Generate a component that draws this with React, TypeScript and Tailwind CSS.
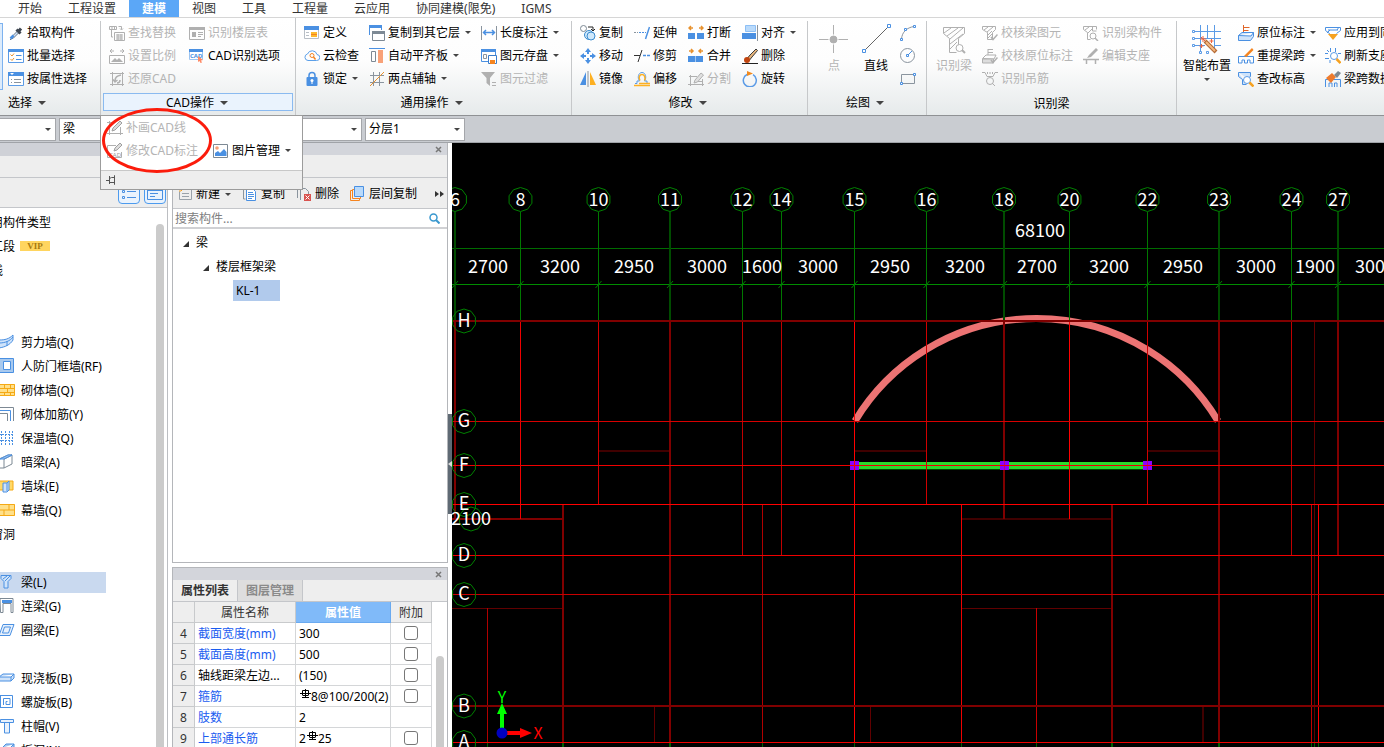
import React, { useState } from 'react';

const BLUE = '#4a90e2';
const GRAY = '#b0b0b0';
const ORANGE = '#f5841f';

// 16x16 toolbar drawings
const ICONS: Record<string, React.ReactNode> = {
    pick: (
        <>
            <path d="M3 14 2 15M4 11.500 10 5.500 11.500 7 5.500 13 3 14Z" fill="#cfe3fa" stroke="#6b7785" />
            <path d="m2.500 13.500 3-3" stroke={BLUE} strokeWidth="2.500" />
            <path d="m8.500 4.500 4 4M10.500 6.500l2.500-3" stroke="#3d4650" strokeWidth="3" />
        </>
    ),
    batch: (
        <>
            <path d="M.5 1.500h15v13H.5z" fill="#fff" stroke="#5b9be6" />
            <path d="M0 1h16v3H0z" fill={BLUE} />
            <path d="m2.500 6.500 1.500 1.500 2-2.500M2.500 11l1.500 1.500 2-2.500" stroke="#e8912d" />
            <path d="M8 7.500h5.500M8 11.500h5.500" stroke={BLUE} />
        </>
    ),
    attr: (
        <>
            <path d="M.5 1.500h15v13H.5z" fill="#fff" stroke="#5b9be6" />
            <path d="M0 1h16v4H0z" fill={BLUE} />
            <path d="M2 2h4L4 4z" fill="#fff" />
            <path d="M3 8.500h1M6 8.500h7M3 11.500h1M6 11.500h7" stroke="#8a949e" />
        </>
    ),
    find: (
        <>
            <path d="M.5 1.500h7v3h-7zM3 1.500v3M5.500 1.500v3M9.500 1.500h3v3M11 3.500l1.500 1.500L14 3.500M2.500 5v7H4" stroke={GRAY} />
            <path d="M5.500 7.500h10v8h-10zM7 10h7M7 12h7M7 14h7M9 9v6M12 9v6" stroke={GRAY} />
        </>
    ),
    scale: (
        <>
            <path d="M1 3h4M3 1 1 3l2 2M15 3h-4m2-2 2 2-2 2M.5 7.500h15v8H.5z" stroke={GRAY} />
            <path d="m2 14 4-4 2 2 2-2 4 4z" fill={GRAY} />
        </>
    ),
    restore: (
        <>
            <path d="M1 2.500h14M3.500 1v14M1 13.500h14M13.500 1v14" stroke={GRAY} />
            <path d="M6 10c0-4 2-5 6-6M4 8.500 6 11l2.500-2M8 12c2 0 3-1 3-3" stroke={GRAY} strokeWidth="1.500" />
        </>
    ),
    floor: (
        <>
            <path d="M.5 2.500h15v12H.5z" stroke={GRAY} />
            <path d="M0 2h16v3H0zM3 7h4v5H3z" fill={GRAY} />
            <path d="M9 7.500h5M9 9.500h5M9 11.500h3" stroke={GRAY} />
        </>
    ),
    cadOpt: (
        <>
            <path d="M.5 1.500h13v10H.5z" fill="#fff" stroke="#9cc4f2" />
            <path d="M0 1h14v3H0z" fill={BLUE} />
            <text x="1" y="10" fontSize="6" fontWeight="700" fill={BLUE}>CAD</text>
            <path d="m9 8 5 4-2 .5 1 2-1.500.500-1-2-1.500 1z" fill="#ff8a65" />
        </>
    ),
    define: (
        <>
            <path d="M.5 1.500h14v12H.5z" fill="#fff" stroke="#b9bfc6" />
            <path d="M0 1h15v4H0z" fill={BLUE} />
            <path d="M2 7.500h3M2 10.500h3" stroke="#b9bfc6" />
            <path d="M7 7h6v5H7z" fill="#fdb92e" /><path d="M7 9.500h6" stroke={ORANGE} />
        </>
    ),
    cloud: (
        <>
            <path d="M4 12.500h8.500a3 3 0 0 0 .5-6A5 5 0 0 0 3.500 6 3.300 3.300 0 0 0 4 12.500Z" stroke="#5b9fe8" />
            <circle cx="8" cy="7.500" r="2" stroke={ORANGE} /><path d="m9.500 9 2 2.500" stroke={ORANGE} strokeWidth="1.500" />
        </>
    ),
    lock: (
        <>
            <path d="M5 7V4.500a3 3 0 0 1 6 0V7" stroke={BLUE} strokeWidth="1.500" />
            <rect x="2.500" y="6" width="11" height="9" rx="1" fill={BLUE} />
            <circle cx="8" cy="9.500" r="1.500" fill="#fff" /><path d="M8 10v3" stroke="#fff" />
        </>
    ),
    copyFloor: (
        <>
            <path d="M.5 10V.5h12V5" stroke={BLUE} /><path d="M0 0h13v3H0z" fill={BLUE} />
            <path d="M3.500 6.500h12v9h-12z" fill="#fff" stroke="#7d8994" /><path d="M3 6h13v3H3z" fill="#7d8994" />
        </>
    ),
    board: (
        <>
            <path d="M0 .5h16" stroke={BLUE} />
            <path d="M2.500 3.500h4v10h-4z" stroke="#7d8994" /><path d="M9 2h5v13H9z" fill="#f8a178" />
        </>
    ),
    axis: (
        <>
            <path d="M4.500 1v14M10.500 1v14M1 4.500h14M1 11.500h14" stroke="#8a949e" />
            <path d="m1 15 14-14" stroke="#e8912d" />
        </>
    ),
    length: (
        <>
            <path d="M.5 1v14M15.500 1v14" stroke="#8a949e" />
            <path d="M3 7.500h10M5 5 2.500 7.500 5 10M11 5l2.500 2.500L11 10" stroke={BLUE} strokeWidth="1.500" />
        </>
    ),
    save: (
        <>
            <path d="M.5 1.500h14v12H.5z" fill="#fff" stroke={BLUE} /><path d="M0 1h15v3H0z" fill={BLUE} />
            <path d="M2.500 6.500h3v4h-3z" stroke="#8a949e" />
            <path d="M7.500 7.500h8v8h-8z" fill="#fff" stroke="#3b7cc9" /><path d="M9 12h5v4H9z" fill={ORANGE} />
        </>
    ),
    filter: (
        <>
            <path d="M0 1h14L9 7v8L5.500 12V7z" fill={GRAY} /><path d="M11 11.500h4M11 14.500h4" stroke={GRAY} />
        </>
    ),
    copy: (
        <>
            <circle cx="3.500" cy="3.500" r="3" stroke="#7d8994" />
            <circle cx="9" cy="10" r="4.500" fill="#cfe8fb" stroke="#3b8ccf" /><circle cx="11" cy="11" r="4" fill="#cfe8fb" stroke="#3b8ccf" />
            <path d="M8 2h5v4M11 4l2 2 2-2" stroke="#222" />
        </>
    ),
    move: (
        <path d="m8 0 3 4H9v2H7V4H5zM8 16l-3-4h2v-2h2v2h2zM0 8l4-3v2h2v2H4v2zM16 8l-4 3V9h-2V7h2V5z" fill={BLUE} />
    ),
    mirror: (
        <>
            <path d="M6 1v13H0z" fill={BLUE} /><path d="M10 1v13h6z" fill="#fdb022" /><path d="M8 0v16" stroke="#8a949e" />
        </>
    ),
    extend: (
        <>
            <path d="M0 7.500h4" stroke="#8a949e" strokeDasharray="2 1" /><path d="M5 7.500h7" stroke={BLUE} strokeDasharray="2 1" />
            <path d="m11.500 14 4-12" stroke={BLUE} strokeWidth="1.500" />
        </>
    ),
    trim: (
        <>
            <path d="M0 7.500h6" stroke="#333" /><path d="M9 7.500h7" stroke={BLUE} strokeDasharray="3 1" strokeWidth="1.500" />
            <path d="m4 14 4-12" stroke="#333" />
        </>
    ),
    offset: (
        <>
            <path d="M1 12.500h2V10h2.500C3 6.500 4.500 1.500 8 1.500S13 6.500 10.500 10H13v2.500h3" stroke="#5b9be6" />
            <path d="M5 12.500h11M6 9.500C4 6 6 3.500 8 3.500s4 2.500 2.500 6" stroke="#fdb022" strokeWidth="1.500" />
            <path d="M0 14.500h16" stroke="#fdb022" strokeWidth="1.500" />
        </>
    ),
    breakUp: (
        <>
            <path d="M0 8h7v6H0zM9 8h7v6H9z" fill={BLUE} />
            <path d="M1 3h4M3 1 1 3l2 2M15 3h-4m2-2 2 2-2 2" stroke="#e8912d" strokeWidth="1.500" />
        </>
    ),
    merge: (
        <>
            <path d="M0 8h7.500v6H0zM8 8h7v6H8z" fill={BLUE} />
            <path d="M1 3h4M3 1l2 2-2 2M15 3h-4m2-2-2 2 2 2" stroke="#e8912d" strokeWidth="1.500" />
        </>
    ),
    split: (
        <>
            <path d="M1 5.500h8M2.500 4v11M0 13.500h16M14.500 8v7M9 10.500h5" stroke={GRAY} />
            <path d="m6 12 1-3 6-7 2.500 2-6 7z" fill="#e0e0e0" stroke={GRAY} />
        </>
    ),
    align: (
        <>
            <path d="M3.500.5h10v6h-10z" fill="#b9dafb" stroke="#8dbff5" /><path d="M0 8h14v6H0z" fill={BLUE} /><path d="M15.500 0v16" stroke="#8a949e" />
        </>
    ),
    erase: (
        <>
            <path d="m4 12 4-5 6-6 1.500 1.500L10 9l-4 5z" fill="#e7b57c" stroke="#3a3a3a" />
            <circle cx="5" cy="12" r="3" fill="#c1440e" /><path d="M0 15.500h16" stroke="#222" />
        </>
    ),
    rotate: (
        <>
            <path d="M5 3.500a6.500 6.500 0 1 0 6 .2" stroke="#5b9be6" strokeWidth="1.500" /><path d="m5 0 6 2.500L5 5z" fill="#f28a1d" />
        </>
    ),
    arc: (
        <>
            <path d="M1.500 14C2 7 7 2.500 14 1.500" stroke="#8a949e" />
            <path d="M.5 13.500h2v2h-2zM4.500 3.500h2v2h-2zM13.500.5h2v2h-2z" fill="#fff" stroke={BLUE} />
        </>
    ),
    circle: (
        <>
            <circle cx="7.500" cy="7.500" r="7" stroke="#8a949e" /><path d="m8 7 4-4" stroke={BLUE} /><path d="M6.500 6.500h2v2h-2z" stroke={BLUE} />
        </>
    ),
    rect: (
        <>
            <path d="M1.500 3.500h13v9h-13z" stroke="#8a949e" /><path d="M.5 11.500h2v2h-2zM13.500 2.500h2v2h-2z" fill="#fff" stroke={BLUE} />
        </>
    ),
    checkBeam: (
        <>
            <path d="M.5 1.500h13v3l-3 3v7h-5v-7l-5-3zM2 5l4-3M5 7l6-5M6 10l4-4M6 13l4-4" stroke={GRAY} />
            <path d="m9 12 2 2.500 4.500-5" stroke={GRAY} strokeWidth="1.500" />
        </>
    ),
    checkMark: (
        <>
            <path d="M6 7V1M6 1.500h5M6 4.500h5M.5 10.500 4 7h10l-2 4z" stroke={GRAY} /><path d="M.5 11h11v4H.5z" fill="#ddd" stroke={GRAY} />
            <path d="m9 12 2 2.500 4.500-5" stroke={GRAY} strokeWidth="1.500" />
        </>
    ),
    hook: (
        <>
            <path d="M0 1.500h3l2 4h6l2-4h3M5.500 1v2M8 1v2M10.500 1v2" stroke={GRAY} /><circle cx="8" cy="10" r="3.500" stroke={GRAY} /><path d="m10 12 3 3" stroke={GRAY} />
        </>
    ),
    beamPart: (
        <>
            <path d="M.5 1.500h13v3M.5 1.500v3l4 3v7h3M2 5l4-3M5 8l4-4M9.500 1v5h4" stroke={GRAY} />
            <circle cx="10" cy="11" r="3" stroke={GRAY} /><path d="m12 13 3 3" stroke={GRAY} strokeWidth="1.500" />
        </>
    ),
    support: (
        <>
            <path d="M0 11.500h16M3.500 12v4M12.500 12v4" stroke={GRAY} strokeWidth="1.500" /><path d="m4 10 2-3 7-7 2 2-7 7z" fill={GRAY} />
        </>
    ),
    mark: (
        <>
            <path d="M5.500 8V0M5.500 2.500h6M5.500 5.500h5" stroke="#e0662a" />
            <path d="M.5 10.500 4 7.500h11.500L13 11zM.5 10.500v5h12l3-4v-4" fill="#cfe3fa" stroke={BLUE} />
        </>
    ),
    span: (
        <>
            <path d="M.5 15V8.500h15V15H12v-3H9.500v3h-3v-3H4v3z" stroke={BLUE} /><path d="m6 8 8-8 1.500 2-7 7z" fill="#f5841f" />
        </>
    ),
    elevation: (
        <>
            <path d="M.5 1.500h12v4l-3 2M.5 1.500v4l4 3v5h4" fill="#cfe3fa" stroke={BLUE} />
            <circle cx="9" cy="9" r="3.500" fill="#fff" stroke="#5b9be6" /><path d="m11.500 11.500 4 4" stroke="#f5a11f" strokeWidth="2.500" />
        </>
    ),
    applyTo: (
        <>
            <path d="M.5 2.500h15M.5 2.500v3l4 3v1M15.500 2.500v3l-4 3M3 5h10M5 5l-3 3M12 5l2-3" stroke={BLUE} /><path d="M3 9h10l-5 6z" fill="#f5a11f" />
        </>
    ),
    refresh: (
        <>
            <path d="M5.500 0v4M10.500 0v4M0 5.500h3M0 10.500h4M13 5.500h3M5 15v-3M2 2l2 2" stroke={BLUE} />
            <circle cx="9" cy="8" r="3.500" fill="#fff" stroke="#5b9be6" /><path d="m11.500 11 4 4" stroke="#f5a11f" strokeWidth="2.500" />
        </>
    ),
    spanCopy: (
        <>
            <path d="M.5 16V8.500h15V16M4 16v-4h3v4M9.500 16v-4H12v4" stroke={BLUE} />
            <path d="m1 7 6-5 4 4-5 6z" fill="#ee7b2d" /><path d="m9 4 4-4 3 2-4 5z" fill="#7d8994" />
        </>
    ),
    drawLine: (
        <>
            <path d="M0 2.500h7M2.500 1v14M0 13.500h16M13.500 7v8" stroke={GRAY} /><path d="m5 11 1-3 7-7 2 2-7 7z" fill="#ddd" stroke="#a0a0a0" />
        </>
    ),
    editMark: (
        <>
            <path d="M9 2.500H.5v12h14V9" stroke={GRAY} /><path d="m7 8 1-3 5-5 2 2-5 5z" fill="#ddd" stroke="#a0a0a0" />
            <text x="2" y="13.500" fontSize="6" fill="#999">CAD</text>
        </>
    ),
    picture: (
        <>
            <path d="M.5 1.500h14v13H.5z" fill="#fff" stroke="#7d8994" /><circle cx="4" cy="5" r="1.800" fill="#f8a178" />
            <path d="m2 13 0-3 3-2 2 2 4-4 2.500 3v4z" fill={BLUE} />
        </>
    ),
    add: (
        <>
            <path d="M4.500 3.500h10v10h-12v-8M5 7.500h7M5 10.500h7" stroke="#9aa2aa" /><path d="M3 0v6M0 3h6M1 1l4 4" stroke="#f5a11f" />
        </>
    ),
    copyDoc: (
        <>
            <path d="M1.500 1v12h2" stroke="#8a949e" /><path d="M4.500 2.500h6l3 3v9h-9z" fill="#fff" stroke={BLUE} /><path d="M6 6.500h5M6 8.500h6M6 10.500h6M6 12.500h4" stroke={BLUE} />
        </>
    ),
    delDoc: (
        <>
            <path d="M1.500 1v11M4.500 14V2.500h5l3 3V8" stroke="#8a949e" /><path d="M8 8h7v7H8z" fill="#d9534f" /><path d="m9.500 9.500 4 4m0-4-4 4" stroke="#fff" />
        </>
    ),
    layers: (
        <>
            <path d="M2.500 4.500h-2v10h9v-2M4.500 3.500h-2v9h8v-2" stroke={ORANGE} /><path d="M4.500.5h9v10h-9z" fill="#b9dafb" stroke={BLUE} />
        </>
    ),
    curveWall: (
        <>
            <path d="M0 6c6 0 10-1 14-5v5c-3 5-8 7-14 8z" fill="#cfe3fa" stroke={BLUE} /><path d="M0 9c6 0 11-2 14-6M8 7v5" stroke={BLUE} />
        </>
    ),
    frameWall: (
        <>
            <path d="M.5.5h14v14H.5z" fill="#a8c9ee" stroke={BLUE} /><path d="M4.500 3.500h7v8h-7z" fill="#fff" stroke={BLUE} />
        </>
    ),
    brick: (
        <>
            <path d="M0 2h16v12H0z" fill="#ffe08a" /><path d="M0 2.500h15.500v11H0M0 6.500h16M0 10.500h16M5.500 2v4M11.500 2v4M8.500 6v4M5.500 10v4M11.500 10v4" stroke="#f5a915" />
        </>
    ),
    rebar: (
        <>
            <path d="M0 1.500h14.500V15M0 7.500h8.500V15" stroke="#7d8994" /><path d="M0 4.500h11.500V15" stroke={BLUE} />
        </>
    ),
    insulate: <path d="M2.500 1v14M6.500 1v14M10.500 1v14M13.500 1v14M0 4.500h13M0 10.500h13" stroke={BLUE} strokeDasharray="2 1" />,
    hiddenBeam: (
        <>
            <path d="m0 5 9-4h4L5 5v9H0zM5 5l8-4v9l-8 4" fill="#fff" stroke="#7d8994" /><path d="m1 5 8-4h4L5 5z" fill="#a8c9ee" stroke={BLUE} />
        </>
    ),
    pier: (
        <>
            <path d="M0 3h14v9H0z" fill="#ffd968" stroke="#f5a915" /><path d="M4 5h4l2-2v9l-2 2H4zM8 5v8" fill="#cfe3fa" stroke={BLUE} />
        </>
    ),
    curtain: (
        <>
            <path d="M0 2h16v12H0z" fill="#ffe08a" /><path d="M0 2.500h15.500v11H0M0 8h16M10 2v6M5 8v6" stroke="#f5a915" />
        </>
    ),
    beam: (
        <>
            <path d="M2 1.500h10v3l-3 3v6.500H5V7.500l-3-3z" fill="#cfe3fa" stroke={BLUE} /><path d="m4 5 4-3M6 7l5-5" stroke={BLUE} />
        </>
    ),
    linkBeam: (
        <>
            <path d="M3 2h10v3H3z" fill={BLUE} /><path d="M1 .5h13v14h-2V5.500H4v9H1.500z" stroke="#7d8994" />
        </>
    ),
    ringBeam: <path d="m0 13.500 4-11h11l-4 11zM3.500 11l2-6h6l-2 6z" fill="#e8f1fc" stroke={BLUE} />,
    slab: <path d="m0 7 4-3h11l-3 3zM0 7v4h12l3-3V4M12 7v4" fill="#cfe3fa" stroke={BLUE} />,
    spiral: <path d="M0 1.500h13.500v12H0M1.500 13V1M4.500 11V4.500h6.500v6H7V7.500h1.500" stroke={BLUE} />,
    cap: <path d="M1.500 1.500h13v3h-4V15H5.500V4.500h-4zM4 4.500h8" fill="#e8f1fc" stroke={BLUE} />,
    hole: <path d="m3 6 4-4h8v9l-4 4H3zM3 6h8l4-4M11 6v9" fill="#a8c9ee" stroke={BLUE} />,
};

const Icon = ({ name }: { name: string }) => (
    <svg width="16" height="16" viewBox="0 0 16 16" fill="none" className="shrink-0">{ICONS[name]}</svg>
);

const Caret = ({ big }: { big?: boolean }) => (
    <svg width={big ? 8 : 6} height={big ? 4 : 3} viewBox="0 0 8 4" className="shrink-0" fill="#444"><path d="M0 0h8L4 4z" /></svg>
);

interface Tool { icon: string; text: string; off?: boolean; menu?: boolean }

const ToolButton = ({ icon, text, off, menu }: Tool) => (
    <button
        disabled={off}
        className="flex h-[23px] items-center gap-[3px] whitespace-nowrap text-black disabled:text-[#b4b4b4]"
    >
        <Icon name={icon} />
        <span>{text}</span>
        {menu && <span className="pl-[2px]"><Caret /></span>}
    </button>
);

const Column = ({ tools }: { tools: Tool[] }) => (
    <div className="flex flex-col items-start">
        {tools.map((t) => <ToolButton key={t.text} {...t} />)}
    </div>
);

const GroupLabel = ({ text }: { text: string }) => (
    <button className="mt-[3px] flex h-[19px] w-full items-center justify-center gap-[6px] pr-[4px]">{text}<Caret big /></button>
);

const COLUMNS: Record<string, Tool[][]> = {
    select: [[
        { icon: 'pick', text: '拾取构件' },
        { icon: 'batch', text: '批量选择' },
        { icon: 'attr', text: '按属性选择' },
    ]],
    cad: [[
        { icon: 'find', text: '查找替换', off: true },
        { icon: 'scale', text: '设置比例', off: true },
        { icon: 'restore', text: '还原CAD', off: true },
    ], [
        { icon: 'floor', text: '识别楼层表', off: true },
        { icon: 'cadOpt', text: 'CAD识别选项' },
    ]],
    common: [[
        { icon: 'define', text: '定义' },
        { icon: 'cloud', text: '云检查' },
        { icon: 'lock', text: '锁定', menu: true },
    ], [
        { icon: 'copyFloor', text: '复制到其它层', menu: true },
        { icon: 'board', text: '自动平齐板', menu: true },
        { icon: 'axis', text: '两点辅轴', menu: true },
    ], [
        { icon: 'length', text: '长度标注', menu: true },
        { icon: 'save', text: '图元存盘', menu: true },
        { icon: 'filter', text: '图元过滤', off: true },
    ]],
    modify: [[
        { icon: 'copy', text: '复制' },
        { icon: 'move', text: '移动' },
        { icon: 'mirror', text: '镜像' },
    ], [
        { icon: 'extend', text: '延伸' },
        { icon: 'trim', text: '修剪' },
        { icon: 'offset', text: '偏移' },
    ], [
        { icon: 'breakUp', text: '打断' },
        { icon: 'merge', text: '合并' },
        { icon: 'split', text: '分割', off: true },
    ], [
        { icon: 'align', text: '对齐', menu: true },
        { icon: 'erase', text: '删除' },
        { icon: 'rotate', text: '旋转' },
    ]],
    identify: [[
        { icon: 'checkBeam', text: '校核梁图元', off: true },
        { icon: 'checkMark', text: '校核原位标注', off: true },
        { icon: 'hook', text: '识别吊筋', off: true },
    ], [
        { icon: 'beamPart', text: '识别梁构件', off: true },
        { icon: 'support', text: '编辑支座', off: true },
    ]],
    edit: [[
        { icon: 'mark', text: '原位标注', menu: true },
        { icon: 'span', text: '重提梁跨', menu: true },
        { icon: 'elevation', text: '查改标高' },
    ], [
        { icon: 'applyTo', text: '应用到同名梁' },
        { icon: 'refresh', text: '刷新支座尺寸' },
        { icon: 'spanCopy', text: '梁跨数据复制' },
    ]],
};

const TABS = ['开始', '工程设置', '建模', '视图', '工具', '工程量', '云应用', '协同建模(限免)', 'IGMS'];

const CadMenu = () => (
    <div className="absolute top-[97px] -left-px z-20 h-[75px] w-[203px] border border-[#9c9c9c] bg-white">
        <div className="flex h-[54px] items-end gap-[15px] pl-[6px]">
            <div className="flex h-full flex-col items-start">
                <ToolButton icon="drawLine" text="补画CAD线" off />
                <ToolButton icon="editMark" text="修改CAD标注" off />
            </div>
            <div className="pb-[8px]"><ToolButton icon="picture" text="图片管理" menu /></div>
        </div>
        <div className="flex h-[19px] items-center border-t border-[#c8c8c8] bg-[#eee] pl-[5px]">
            <svg width="10" height="10" viewBox="0 0 10 10" fill="none" stroke="#555">
                <path d="M0 5.500h3M3.500 1v8M3.500 3.500l2-1h3v-2M3.500 7.500h5v2M8.500.5v9" />
            </svg>
        </div>
        <div className="pointer-events-none absolute -top-[8px] left-px h-[65px] w-[110px] rounded-[50%] border-[3px] border-[#fb1c0c]" />
    </div>
);

const Ribbon = () => (
    <div className="flex h-[98px] shrink-0 border-b border-[#8f9194] bg-[linear-gradient(#fff_0%,#fdfdfd_45%,#e6eaeb_100%)] pt-[3px]">
        <div className="flex w-[101px] shrink-0 border-r border-[#c6c8ca]">
            <div className="mt-[2px] h-[67px] w-[3px] border border-l-0 border-[#7db2ef] bg-[#dcebfb]" />
            <div className="pl-[5px]">
                <Column tools={COLUMNS.select[0]} />
                <button className="mt-[3px] flex h-[19px] items-center gap-[6px]">选择<Caret big /></button>
            </div>
        </div>
        <div className="relative -mt-[3px] w-[195px] shrink-0 border-r border-[#c6c8ca] pt-[3px]">
            <div className="flex h-[69px] gap-[13px] pl-[8px]">
                {COLUMNS.cad.map((c, i) => <Column key={i} tools={c} />)}
            </div>
            <button className="mx-[2px] mt-[3px] flex h-[18px] w-[190px] items-center justify-center gap-[6px] border border-[#8abaf0] bg-[#eaf3fd] pt-[2px] pr-[2px]">
                CAD操作<Caret big />
            </button>
            <CadMenu />
        </div>
        <div className="w-[276px] shrink-0 border-r border-[#c6c8ca]">
            <div className="flex h-[69px] gap-[10px] pl-[8px]">
                {COLUMNS.common.map((c, i) => <Column key={i} tools={c} />)}
            </div>
            <GroupLabel text="通用操作" />
        </div>
        <div className="w-[236px] shrink-0 border-r border-[#c6c8ca]">
            <div className="flex h-[69px] gap-[11px] pl-[8px]">
                {COLUMNS.modify.map((c, i) => <Column key={i} tools={c} />)}
            </div>
            <GroupLabel text="修改" />
        </div>
        <div className="w-[119px] shrink-0 border-r border-[#c6c8ca]">
            <div className="flex h-[69px] gap-[12px] pl-[11px]">
                <button disabled className="flex w-[30px] flex-col items-center gap-[3px] pt-[3px] text-[#b4b4b4]">
                    <svg width="30" height="30" viewBox="0 0 30 30" fill="none" stroke={GRAY}>
                        <path d="M14.500 1v28M0 15.500h29" /><circle cx="14.500" cy="15.500" r="5" fill="#fff" stroke="none" /><circle cx="14.500" cy="15.500" r="3.500" fill={GRAY} />
                    </svg>
                    点
                </button>
                <button className="flex w-[30px] flex-col items-center gap-[3px] pt-[3px]">
                    <svg width="30" height="30" viewBox="0 0 30 30" fill="none" stroke={BLUE}>
                        <path d="M3 27 28 2" stroke="#666" /><path d="M1.500 25.500h3v3h-3zM26.500.5h3v3h-3z" fill="#fff" />
                    </svg>
                    直线
                </button>
                <div className="-ml-[3px] flex flex-col">
                    {['arc', 'circle', 'rect'].map((n) => (
                        <button key={n} aria-label={n} className="flex h-[23px] items-center"><Icon name={n} /></button>
                    ))}
                </div>
            </div>
            <GroupLabel text="绘图" />
        </div>
        <div className="w-[250px] shrink-0 border-r border-[#c6c8ca]">
            <div className="flex h-[69px] gap-[10px] pl-[9px]">
                <button disabled className="flex w-[36px] flex-col items-center gap-[3px] pt-[3px] text-[#b4b4b4]">
                    <svg width="30" height="30" viewBox="0 0 30 30" fill="none" stroke={GRAY}>
                        <path d="M4.500 3.500h21v6l-6 5v8M4.500 3.500v6l6 5v14h7M5 9l7-5M8 12l11-8M11 15 24 4M11 20l13-10M11 25l7-7" />
                        <circle cx="20.500" cy="24" r="3.500" fill="#fff" /><path d="m23 26 3 3" strokeWidth="2" />
                    </svg>
                    识别梁
                </button>
                {COLUMNS.identify.map((c, i) => <Column key={i} tools={c} />)}
            </div>
            <div className="mt-[3px] flex h-[22px] items-center justify-center">识别梁</div>
        </div>
        <div className="flex gap-[7px] pl-[6px]">
            <button className="flex w-[48px] flex-col items-center gap-[3px] whitespace-nowrap pt-[3px]">
                <svg width="30" height="30" viewBox="0 0 30 30" fill="none" stroke="#5b9be6">
                    <path d="M8.500 1v28M15.500 1v14M22.500 1v28M1 7.500h28M1 14.500h28M1 21.500h12M22 21.500h7" />
                    <path d="M.5 6.500h2v2h-2zM.5 13.500h2v2h-2zM.5 20.500h2v2h-2zM7.500 27.500h2v2h-2zM14.500 27.500h2v2h-2z" fill="#fff" />
                    <path d="m13 17 11 11" stroke="#b56a35" strokeWidth="4" /><path d="m14 18 9 9" stroke="#f2b880" strokeWidth="2" />
                    <path d="M11 12v6M8 15h6M9 13l4 4M19.500 15v4M17.500 17h4M9.500 20v4M7.500 22h4" stroke="#f0623a" />
                </svg>
                <span>智能布置</span>
                <Caret />
            </button>
            <div className="flex gap-[9px]">
                {COLUMNS.edit.map((c, i) => <Column key={i} tools={c} />)}
            </div>
        </div>
    </div>
);

const Combo = ({ value, label, width }: { value: string; label: string; width: string }) => (
    <div className={`relative flex h-[23px] items-center border border-[#a4a6aa] bg-white ${width}`}>
        <select aria-label={label} className="h-full w-full appearance-none bg-transparent pl-[3px] outline-none">
            <option>{value}</option>
        </select>
        <span className="pointer-events-none absolute right-[4px]"><Caret /></span>
    </div>
);

// Row without an icon is a category title
const COMPONENT_ROWS: { text: string; icon?: string; vip?: boolean }[] = [
    { text: '常用构件类型' },
    { text: '施工段', vip: true },
    { text: '轴线' },
    { text: '' },
    { text: '' },
    { text: '剪力墙(Q)', icon: 'curveWall' },
    { text: '人防门框墙(RF)', icon: 'frameWall' },
    { text: '砌体墙(Q)', icon: 'brick' },
    { text: '砌体加筋(Y)', icon: 'rebar' },
    { text: '保温墙(Q)', icon: 'insulate' },
    { text: '暗梁(A)', icon: 'hiddenBeam' },
    { text: '墙垛(E)', icon: 'pier' },
    { text: '幕墙(Q)', icon: 'curtain' },
    { text: '门窗洞' },
    { text: '' },
    { text: '梁(L)', icon: 'beam' },
    { text: '连梁(G)', icon: 'linkBeam' },
    { text: '圈梁(E)', icon: 'ringBeam' },
    { text: '' },
    { text: '现浇板(B)', icon: 'slab' },
    { text: '螺旋板(B)', icon: 'spiral' },
    { text: '柱帽(V)', icon: 'cap' },
    { text: '板洞(N)', icon: 'hole' },
];

const ComponentPanel = () => {
    const [selected, setSelected] = useState('梁(L)');
    return (
        <aside className="flex w-[168px] shrink-0 flex-col border-r border-[#bcbec2] bg-white">
            <div className="h-[13px] shrink-0 bg-[#cfd1d7]" />
            <div className="h-[22px] shrink-0 border-b border-[#c4c6ca] bg-[#eee]" />
            <div className="flex h-[30px] shrink-0 items-end justify-end gap-[4px] border-b border-[#c4c6ca] bg-[#eee] pr-px pb-[3px]">
                <button aria-label="列表" className="flex h-[20px] w-[22px] items-center justify-center rounded-[4px] border border-[#4d9bee] bg-[#eaf3fd]">
                    <svg width="14" height="12" viewBox="0 0 14 12" fill="none" stroke={BLUE}><path d="M5 3.500h9M5 9.500h9M.5 2.500h2v2h-2zM.5 8.500h2v2h-2z" /></svg>
                </button>
                <button aria-label="卡片" className="flex h-[20px] w-[22px] items-center justify-center rounded-[4px] border border-[#4d9bee] bg-[#eaf3fd]">
                    <svg width="16" height="12" viewBox="0 0 16 12" fill="none" stroke={BLUE}><path d="M.5 1.500h15v10H.5zM3 5.500h8M3 8.500h5" /><path d="M0 2h16" strokeWidth="2" /></svg>
                </button>
            </div>
            <div className="flex min-h-0 flex-1 overflow-hidden">
                <ul className="-ml-[21px] w-[127px] pt-[2px]">
                    {COMPONENT_ROWS.map((row, i) => (
                        <li key={i} className="flex h-[24px] items-center whitespace-nowrap">
                            {row.icon ? (
                                <button
                                    onClick={() => setSelected(row.text)}
                                    className={`flex h-[21px] w-full items-center gap-[6px] pl-[20px] ${selected === row.text ? 'bg-[#c9d9ef]' : ''}`}
                                >
                                    <Icon name={row.icon} /><span className="pt-[2px]">{row.text}</span>
                                </button>
                            ) : <span className="pt-[2px]">{row.text}</span>}
                            {row.vip && (
                                <span className="ml-[5px] flex h-[10px] w-[30px] items-center justify-center bg-[#ffd55f] font-['Liberation_Serif',serif] text-[9px] font-bold text-[#a87a10]">VIP</span>
                            )}
                        </li>
                    ))}
                </ul>
                <div className="mt-[16px] ml-auto mr-[3px] w-[8px] shrink-0 rounded-t-[4px] bg-[#cbcbcb]" />
            </div>
        </aside>
    );
};

const PanelHeader = () => (
    <div className="flex h-[12px] shrink-0 items-center justify-end bg-[#d3d5db] pr-[5px]">
        <button aria-label="关闭">
            <svg width="7" height="7" viewBox="0 0 7 7" className="block" stroke="#777" strokeWidth="1.500"><path d="m1 1 5 5M6 1 1 6" /></svg>
        </button>
    </div>
);

const Expander = () => (
    <svg width="7" height="7" viewBox="0 0 7 7" className="shrink-0"><path d="M6 1v6H0z" fill="#333" /></svg>
);

const ListPanel = () => (
    <section className="mb-[4px] flex min-h-0 flex-1 flex-col border border-t-0 border-[#b4b6ba] bg-white">
        <PanelHeader />
        <div className="h-[23px] shrink-0 border-b border-[#c4c6ca] bg-[#eee]" />
        <div className="flex h-[31px] shrink-0 items-center gap-[11px] border-b border-[#c4c6ca] bg-[#eee] pt-[2px] pl-[4px]">
            <ToolButton icon="add" text="新建" menu />
            <ToolButton icon="copyDoc" text="复制" />
            <ToolButton icon="delDoc" text="删除" />
            <ToolButton icon="layers" text="层间复制" />
            <button aria-label="更多" className="ml-auto mr-[3px]">
                <svg width="9" height="6" viewBox="0 0 9 6" fill="#333"><path d="m0 0 4 3-4 3zM5 0l4 3-4 3z" /></svg>
            </button>
        </div>
        <div className="flex h-[20px] shrink-0 items-center border-b-2 border-[#d0d1d4] pl-[2px] pr-[7px]">
            <input aria-label="搜索构件" placeholder="搜索构件..." className="min-w-0 flex-1 pt-[2px] outline-none placeholder:text-[#808080]" />
            <svg width="11" height="11" viewBox="0 0 11 11" fill="none" stroke="#3a98cf" strokeWidth="1.500"><circle cx="4.500" cy="4.500" r="3.500" /><path d="m7 7 3.500 3.500" strokeWidth="2" /></svg>
        </div>
        <ul className="pt-[2px]">
            <li>
                <div className="flex h-[24px] items-center gap-[6px] pl-[10px]"><Expander />梁</div>
                <ul>
                    <li>
                        <div className="flex h-[24px] items-center gap-[6px] pl-[30px]"><Expander />楼层框架梁</div>
                        <button className="mt-px ml-[60px] flex h-[21px] w-[47px] items-center bg-[#b1caec] pl-[3px]">KL-1</button>
                    </li>
                </ul>
            </li>
        </ul>
    </section>
);

const RebarMark = () => (
    <svg width="11" height="10" viewBox="0 0 11 10" fill="none" stroke="#000" className="ml-px inline-block align-[2px]">
        <path d="M5.500 0v9M2 8.500h7M0 4.500h11M2.500 1.500h6M2.500 1.500v4.500M8.500 1.500v4.500M2.500 6.500h6" />
    </svg>
);

const PROPERTIES = [
    { no: 4, name: '截面宽度(mm)', value: '300', check: true },
    { no: 5, name: '截面高度(mm)', value: '500', check: true },
    { no: 6, name: '轴线距梁左边...', value: '(150)', check: true, plain: true },
    { no: 7, name: '箍筋', value: <><RebarMark />8@100/200(2)</>, check: true },
    { no: 8, name: '肢数', value: '2', check: false },
    { no: 9, name: '上部通长筋', value: <>2<RebarMark />25</>, check: true },
];

const PropertyPanel = () => (
    <section className="flex h-[180px] shrink-0 flex-col overflow-hidden border border-b-0 border-[#b4b6ba] bg-white">
        <PanelHeader />
        <div className="flex h-[22px] shrink-0 border-b border-[#c4c6ca] bg-[#eee] font-bold">
            <button className="w-[65px] border-r border-[#c4c6ca] text-[#333]">属性列表</button>
            <button className="w-[65px] border-r border-[#c4c6ca] bg-[#dedede] text-[#8a8a8a]">图层管理</button>
        </div>
        <div className="flex">
            <table className="w-[259px] table-fixed border-separate border-spacing-0 text-left">
                <thead>
                    <tr className="h-[21px] text-center text-[#333]">
                        <th className="w-[22px] border-r border-b border-[#c8cacc] bg-[#eee] p-0" />
                        <th className="w-[101px] border-r border-b border-[#c8cacc] bg-[#eee] p-0 pt-[2px] font-normal">属性名称</th>
                        <th className="w-[95px] border-r border-b border-[#6aaaf0] bg-[#80baf9] p-0 pt-[2px] font-bold text-white">属性值</th>
                        <th className="w-[41px] border-r border-b border-[#c8cacc] bg-[#eee] p-0 pt-[2px] font-normal">附加</th>
                    </tr>
                </thead>
                <tbody>
                    {PROPERTIES.map((p) => (
                        <tr key={p.no} className="h-[21px]">
                            <td className="border-r border-b border-[#c8cacc] bg-[#eee] p-0 pt-[2px] text-center text-[#333]">{p.no}</td>
                            <td className={`overflow-hidden border-r border-b border-[#d4d6d8] p-0 pt-[2px] pl-[3px] whitespace-nowrap ${p.plain ? 'text-black' : 'text-[#1a5cf0]'}`}>{p.name}</td>
                            <td className="overflow-hidden border-r border-b border-[#d4d6d8] p-0 pt-[2px] pl-[3px] whitespace-nowrap">{p.value}</td>
                            <td className="border-r border-b border-[#d4d6d8] p-0 text-center">
                                {p.check && (
                                    <input type="checkbox" aria-label={`附加 ${p.name}`} className="mx-auto block h-[14px] w-[14px] appearance-none rounded-[3px] border border-[#777] bg-white" />
                                )}
                            </td>
                        </tr>
                    ))}
                </tbody>
            </table>
            <div className="mt-[54px] ml-[4px] w-[8px] rounded-t-[4px] bg-[#cbcbcb]" />
        </div>
    </section>
);

// [label, x, y where the axis line ends, line colour of the red part]
const AXES: [string, number, number, string][] = [
    ['6', 455, 519, '#800000'],
    ['8', 520.5, 519, '#f00000'],
    ['10', 598.5, 504, '#d00000'],
    ['11', 670, 742, '#800000'],
    ['12', 742.5, 555, '#c00000'],
    ['14', 781.5, 555, '#c00000'],
    ['15', 854.5, 742, '#ff0000'],
    ['16', 926.5, 504, '#d00000'],
    ['18', 1004, 519, '#800000'],
    ['20', 1069.5, 519, '#ff0000'],
    ['22', 1147.5, 504, '#d00000'],
    ['23', 1219, 742, '#800000'],
    ['24', 1291.5, 555, '#c00000'],
    ['27', 1338, 555, '#800000'],
];

const ROWS: [string, number, string][] = [
    ['H', 321, '#800000'],
    ['G', 421.5, '#d80000'],
    ['F', 465.5, '#f00000'],
    ['E', 504.5, '#ff0000'],
    ['D', 555.5, '#f00000'],
    ['C', 594.5, '#c80000'],
    ['B', 706, '#800000'],
    ['A', 742.5, '#f00000'],
];

const SPANS: [string, number][] = [
    ['2700', 488], ['3200', 560], ['2950', 634], ['3000', 707], ['1600', 762], ['3000', 818], ['2950', 890],
    ['3200', 965], ['2700', 1037], ['3200', 1109], ['2950', 1183], ['3000', 1256], ['1900', 1315], ['3000', 1375],
];

// [x, y1, y2, colour]
const VERTICALS: [number, number, number, string][] = [
    [487.5, 608, 742, '#b00000'],
    [563, 504, 742, '#800000'],
    [654.5, 706, 742, '#600000'],
    [762.5, 504, 742, '#b00000'],
    [870.5, 706, 742, '#600000'],
    [961.5, 504, 742, '#f00000'],
    [1036.5, 608, 742, '#c80000'],
    [1112, 504, 742, '#800000'],
    [1203, 706, 742, '#400000'],
    [1311.5, 504, 742, '#c00000'],
    [1314.5, 321, 742, '#600000'],
    [1318.5, 504, 742, '#ff0000'],
];

const HORIZONTALS: [number, number, number, string][] = [
    [598, 670, 451, '#400000'],
    [854, 926, 451, '#400000'],
    [1147, 1219, 451, '#400000'],
    [452, 563, 519, '#800000'],
    [961, 1112, 519, '#400000'],
    [452, 563, 608.5, '#600000'],
    [961, 1112, 608.5, '#600000'],
];

const bubble = (cx: number, cy: number) =>
    Array.from({ length: 10 }, (_, i) => {
        const a = (i * Math.PI) / 5 - Math.PI / 2;
        return `${cx + 12 * Math.cos(a)},${cy + 12 * Math.sin(a)}`;
    }).join(' ');

// Whole coordinates fall between pixels, so those lines are two pixels wide
const lineWidth = (v: number) => (Number.isInteger(v) ? 2 : 1);

const Drawing = () => (
    <svg viewBox="452 143 932 604" preserveAspectRatio="xMinYMin slice" fontFamily="'Noto Sans CJK SC', sans-serif" className="block h-full w-full bg-black">
        <path d="M855 421A212 212 0 0 1 1218 421" fill="none" stroke="#ec7373" strokeWidth="7" />
        <path d="M854 462h293v7H854z" fill="#2bdc2b" />
        <path d="M854 469h293v1H854z" fill="#005000" />
        <g shapeRendering="crispEdges">
            <path d="M452 248.500H1384" stroke="#006c00" />
            <path d="M452 284.500H1384" stroke="#008c00" />
            {AXES.map(([name, x]) => (
                <path key={name} d={`M${x} 212V321`} stroke={lineWidth(x) === 2 ? '#004c00' : '#007800'} strokeWidth={lineWidth(x)} />
            ))}
            {HORIZONTALS.map(([x1, x2, y, c], i) => (
                <path key={i} d={`M${x1} ${y}H${x2}`} stroke={c} strokeWidth={lineWidth(y)} />
            ))}
            {VERTICALS.map(([x, y1, y2, c]) => (
                <path key={x} d={`M${x} ${y1}V${y2}`} stroke={c} strokeWidth={lineWidth(x)} />
            ))}
            {AXES.map(([name, x, end, c]) => (
                <path key={name} d={`M${x} 321V${end}`} stroke={c} strokeWidth={lineWidth(x)} />
            ))}
            {[487.5, 563, 670, 762.5, 854.5, 961.5, 1036.5, 1112, 1219, 1311.5, 1314.5, 1318.5].map((x) => (
                <path key={x} d={`M${x} 743V900`} stroke="#006000" strokeWidth={lineWidth(x)} />
            ))}
            {[854, 1004, 1147].map((x) => <rect key={x} x={x - 4} y={461} width={9} height={9} fill="#8b00ff" />)}
            <path d="M854.500 461v9" stroke="#ff0000" />
            <path d="M1004 461v9M1147 461v9" stroke="#c00080" />
            {ROWS.map(([name, y, c]) => (
                <path key={name} d={`M452 ${y}H1384`} stroke={c} strokeWidth={lineWidth(y)} />
            ))}
        </g>
        <g fill="none" stroke="#008000">
            {AXES.map(([name, x]) => <polygon key={name} points={bubble(x, 199.5)} />)}
            {AXES.map(([name, x]) => <path key={name} d={`M${x - 3} 288l6-7`} />)}
            {ROWS.map(([name, y]) => <polygon key={name} points={bubble(464, y)} />)}
            <polygon points={bubble(471, 519)} />
        </g>
        <g fontSize="18" fill="#fff" textAnchor="middle">
            {AXES.map(([name, x]) => <text key={name} x={x} y={206}>{name}</text>)}
            {ROWS.map(([name, y]) => <text key={name} x={464} y={Math.floor(y + 6)}>{name}</text>)}
            {SPANS.map(([len, x]) => <text key={x} x={x} y={273}>{len}</text>)}
            <text x={1040} y={237}>68100</text>
            <text x={471} y={525}>2100</text>
        </g>
        <path d="M500 733V714h-3l5-11 5 11h-3v19z" fill="#00ff00" />
        <path d="M502 731h18v-3l12 5-12 5v-3h-18z" fill="#ff0000" />
        <circle cx="502" cy="733" r="5.500" fill="#0000c0" />
        <g fontSize="16" textAnchor="middle">
            <text x={502} y={703} fill="#00ff00">Y</text>
            <text x={538} y={739} fill="#ff0000">X</text>
        </g>
    </svg>
);

const App: React.FC = () => {
    const [tab, setTab] = useState('建模');

    return (
        <div className="flex h-screen w-full flex-col overflow-hidden bg-white font-['Noto_Sans','Noto_Sans_CJK_SC',sans-serif] text-[12px] leading-[18px] text-black">
            <nav className="flex h-[18px] shrink-0 border-b border-[#d6d6d6] pl-[5px]">
                {TABS.map((t) => (
                    <button
                        key={t}
                        onClick={() => setTab(t)}
                        className={`px-[13px] leading-[17px] ${t === tab ? 'bg-[#5ba7f7] font-bold text-white' : 'text-[#333]'}`}
                    >
                        {t}
                    </button>
                ))}
            </nav>
            <Ribbon />
            <div className="flex h-[27px] shrink-0 items-center gap-[3px] border-b border-[#a0a3a8] bg-[#c9ccd1]">
                <Combo label="楼层" value="" width="w-[56px] border-l-0" />
                <Combo label="构件类别" value="梁" width="w-[150px]" />
                <Combo label="构件名称" value="" width="w-[150px]" />
                <Combo label="分层" value="分层1" width="w-[100px]" />
            </div>
            <div className="flex min-h-0 flex-1">
                <ComponentPanel />
                <div className="ml-[4px] flex w-[276px] shrink-0 flex-col">
                    <ListPanel />
                    <PropertyPanel />
                </div>
                <div className="flex w-[4px] shrink-0 flex-col justify-center">
                    <button aria-label="折叠" className="mt-[38px] flex h-[100px] items-center bg-[#5f6a74]">
                        <svg width="4" height="6" viewBox="0 0 4 6"><path d="M4 0v6L0 3z" fill="#ddd" /></svg>
                    </button>
                </div>
                <main className="min-w-0 flex-1 overflow-hidden"><Drawing /></main>
            </div>
        </div>
    );
};

export default App;
